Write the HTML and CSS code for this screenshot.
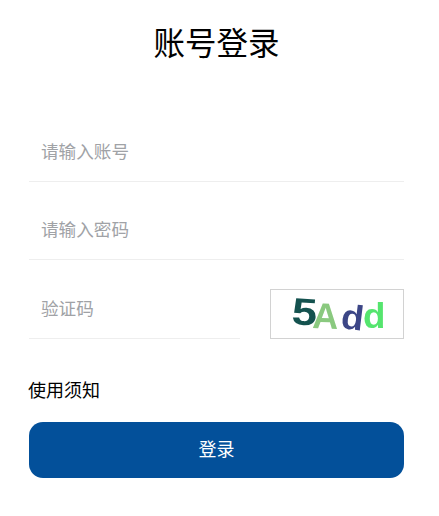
FILE: index.html
```html
<!DOCTYPE html>
<html lang="zh">
<head>
<meta charset="utf-8">
<title>账号登录</title>
<link rel="stylesheet" href="styles.css">
</head>
<body>
<main class="login">
  <h1 class="title">账号登录</h1>
  <form class="form">
    <div class="field field-a"><input class="input" type="text" placeholder="请输入账号"></div>
    <div class="field field-b"><input class="input" type="password" placeholder="请输入密码"></div>
    <div class="captcha-row">
      <div class="field captcha-field"><input class="input" type="text" placeholder="验证码"></div>
      <div class="captcha">
        <svg class="captcha-img" viewBox="0 0 132 48" width="132" height="48" aria-label="5Add">
          <text class="c5" transform="translate(20 34) rotate(4) scale(1.2 1)">5</text>
          <text class="cA" transform="translate(41 38) rotate(2)">A</text>
          <text class="cd1" transform="translate(69 38) rotate(7) scale(1.05 1)">d</text>
          <text class="cd2" transform="translate(92 38) scale(1.05 1)">d</text>
        </svg>
      </div>
    </div>
    <a class="notice" href="#">使用须知</a>
    <button class="submit" type="button">登录</button>
  </form>
</main>
</body>
</html>
```
FILE: styles.css
```css
* { box-sizing: border-box; }
html, body { margin: 0; background: #fff; }
body {
  width: 439px;
  height: 516px;
  overflow: hidden;
  font-family: "Liberation Sans", "Noto Sans CJK SC", sans-serif;
}
.login { width: 375px; margin-left: 29px; padding-top: 21px; }
.title {
  margin: 0;
  height: 46px;
  font-size: 31.5px;
  line-height: 46px;
  font-weight: 400;
  color: #000;
  text-align: center;
}
.form { display: flex; flex-direction: column; margin-top: 36px; }
.field { padding-top: 27px; border-bottom: 1px solid #eeeeee; }
.field-a { height: 79px; }
.field-b { height: 78px; padding-top: 26px; }
.input {
  display: block;
  width: 100%;
  height: 44px;
  padding: 0 12px;
  border: 0;
  outline: 0;
  background: transparent;
  font: inherit;
  font-size: 17.6px;
  color: #333;
}
.input::placeholder { color: #a0a2a6; opacity: 1; }
.captcha-row { display: flex; justify-content: space-between; align-items: flex-end; }
.captcha-field { width: 211px; height: 79px; padding-top: 27px; }
.captcha { width: 134px; height: 50px; border: 1px solid #d2d2d2; }
.captcha-img { display: block; overflow: visible; filter: blur(0.4px); }
.captcha-img text { font-family: "Liberation Sans", sans-serif; font-weight: 700; }
.c5 { fill: #14524f; font-size: 38px; }
.cA { fill: #8ac97f; font-size: 36px; }
.cd1 { fill: #3c4686; font-size: 35px; }
.cd2 { fill: #55e56e; font-size: 35px; }
.notice {
  margin-top: 40px;
  margin-left: -1px;
  font-size: 18px;
  line-height: 24px;
  color: #000;
  text-decoration: none;
}
.submit {
  height: 56px;
  margin-top: 19px;
  padding: 0 0 4px;
  border: 0;
  border-radius: 14px;
  background: #03509a;
  color: #fff;
  font: inherit;
  font-size: 18px;
}
```
